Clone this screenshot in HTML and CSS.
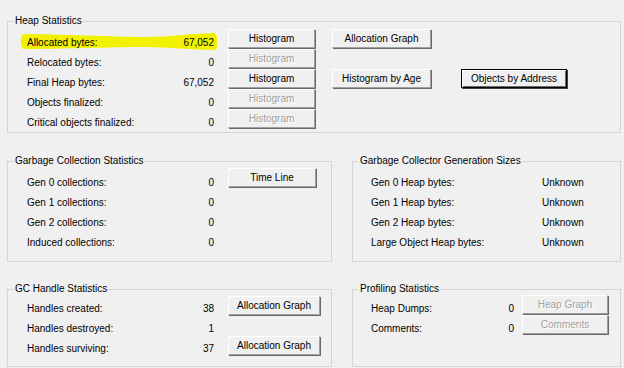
FILE: index.html
```html
<!DOCTYPE html>
<html>
<head>
<meta charset="utf-8">
<link rel="stylesheet" href="styles.css">
</head>
<body>
<div class="page">
  <fieldset class="box heap">
    <legend>Heap Statistics</legend>
    <div class="cols">
      <div class="stats heap-stats">
        <div class="row hl">
          <svg class="marker" width="200" height="18" viewBox="0 0 200 18"><path d="M3,1 C40,1 90,4 125,4 C150,4 175,0 195,0 C198,4 198,13 196,17 C170,17 150,14 125,14 C90,14 40,16 3,16 C0,12 0,5 3,1 Z"/></svg>
          <span class="lbl">Allocated bytes:</span><span class="val">67,052</span>
        </div>
        <div class="row"><span class="lbl">Relocated bytes:</span><span class="val">0</span></div>
        <div class="row"><span class="lbl">Final Heap bytes:</span><span class="val">67,052</span></div>
        <div class="row"><span class="lbl">Objects finalized:</span><span class="val">0</span></div>
        <div class="row"><span class="lbl">Critical objects finalized:</span><span class="val">0</span></div>
      </div>
      <div class="btncol hist-col">
        <button class="btn">Histogram</button>
        <button class="btn" disabled>Histogram</button>
        <button class="btn">Histogram</button>
        <button class="btn" disabled>Histogram</button>
        <button class="btn" disabled>Histogram</button>
      </div>
      <div class="btncol graph-col">
        <button class="btn">Allocation Graph</button>
        <button class="btn spaced">Histogram by Age</button>
      </div>
      <div class="btncol addr-col">
        <button class="btn default">Objects by Address</button>
      </div>
    </div>
  </fieldset>

  <div class="pair mid">
    <fieldset class="box left gc">
      <legend>Garbage Collection Statistics</legend>
      <div class="cols">
        <div class="stats gc-stats">
          <div class="row"><span class="lbl">Gen 0 collections:</span><span class="val">0</span></div>
          <div class="row"><span class="lbl">Gen 1 collections:</span><span class="val">0</span></div>
          <div class="row"><span class="lbl">Gen 2 collections:</span><span class="val">0</span></div>
          <div class="row"><span class="lbl">Induced collections:</span><span class="val">0</span></div>
        </div>
        <div class="btncol time-col">
          <button class="btn">Time Line</button>
        </div>
      </div>
    </fieldset>
    <fieldset class="box right gen">
      <legend>Garbage Collector Generation Sizes</legend>
      <div class="stats gen-stats">
        <div class="grow"><span class="lbl">Gen 0 Heap bytes:</span><span>Unknown</span></div>
        <div class="grow"><span class="lbl">Gen 1 Heap bytes:</span><span>Unknown</span></div>
        <div class="grow"><span class="lbl">Gen 2 Heap bytes:</span><span>Unknown</span></div>
        <div class="grow"><span class="lbl">Large Object Heap bytes:</span><span>Unknown</span></div>
      </div>
    </fieldset>
  </div>

  <div class="pair bottom">
    <fieldset class="box left handle">
      <legend>GC Handle Statistics</legend>
      <div class="cols">
        <div class="stats handle-stats">
          <div class="row"><span class="lbl">Handles created:</span><span class="val">38</span></div>
          <div class="row"><span class="lbl">Handles destroyed:</span><span class="val">1</span></div>
          <div class="row"><span class="lbl">Handles surviving:</span><span class="val">37</span></div>
        </div>
        <div class="btncol handle-col">
          <button class="btn">Allocation Graph</button>
          <button class="btn spaced2">Allocation Graph</button>
        </div>
      </div>
    </fieldset>
    <fieldset class="box right prof">
      <legend>Profiling Statistics</legend>
      <div class="cols">
        <div class="stats prof-stats">
          <div class="row"><span class="lbl">Heap Dumps:</span><span class="val">0</span></div>
          <div class="row"><span class="lbl">Comments:</span><span class="val">0</span></div>
        </div>
        <div class="btncol prof-col">
          <button class="btn" disabled>Heap Graph</button>
          <button class="btn" disabled>Comments</button>
        </div>
      </div>
    </fieldset>
  </div>
</div>
</body>
</html>
```
FILE: styles.css
```css
html, body {
  margin: 0;
  padding: 0;
  background: #f0f0f0;
}
body {
  font-family: "Liberation Sans", Arial, sans-serif;
  font-size: 10px;
  color: #000;
  width: 624px;
  height: 368px;
  overflow: hidden;
}
.page {
  padding: 15px 0 0 7px;
  display: flex;
  flex-direction: column;
}
.box {
  box-sizing: border-box;
  margin: 0;
  padding: 0;
  min-width: 0;
  border: 1px solid #d5d5d5;
}
.box legend {
  margin-left: 6px;
  padding: 0 1px;
  font-size: 10px;
  line-height: 12px;
  color: #000;
}
.heap { width: 614px; height: 118px; }
.pair { display: flex; gap: 20px; }
.mid { margin-top: 22px; }
.bottom { margin-top: 21px; }
.left { width: 325px; }
.right { width: 269px; }
.gc, .gen { height: 107px; }
.handle, .prof { height: 84px; }

.cols { display: flex; align-items: flex-start; }
.stats { display: flex; flex-direction: column; margin-left: 19px; }
.row {
  position: relative;
  display: flex;
  justify-content: space-between;
  height: 20px;
  line-height: 20px;
}
.row span, .grow span { position: relative; }
.heap-stats, .gc-stats, .handle-stats { width: 187px; }
.heap-stats { padding-top: 6px; }
.gc-stats { padding-top: 6px; }
.handle-stats { padding-top: 4px; }
.gen-stats { margin-left: 18px; padding-top: 6px; }
.grow {
  display: grid;
  grid-template-columns: 171px auto;
  height: 20px;
  line-height: 20px;
}
.prof-stats { margin-left: 18px; width: 143px; padding-top: 4px; }

.marker {
  position: absolute;
  left: -7px;
  top: 0;
  fill: #f2f200;
}

.btncol { display: flex; flex-direction: column; align-items: stretch; }
.hist-col { margin-left: 14px; width: 87px; padding-top: 2px; }
.graph-col { margin-left: 17px; width: 99px; padding-top: 2px; }
.addr-col { margin-left: 30px; width: 106px; padding-top: 42px; }
.time-col { margin-left: 14px; width: 88px; padding-top: 1px; }
.handle-col { margin-left: 14px; width: 92px; padding-top: 1px; }
.prof-col { margin-left: 8px; width: 86px; padding-top: 0; }

.btn {
  box-sizing: border-box;
  height: 19px;
  margin: 0 0 1px 0;
  padding: 0;
  font-family: "Liberation Sans", Arial, sans-serif;
  font-size: 10px;
  line-height: 16px;
  color: #000;
  background: #f0f0f0;
  border-top: 1px solid #ffffff;
  border-left: 1px solid #ffffff;
  border-right: 1px solid #a0a0a0;
  border-bottom: 1px solid #a0a0a0;
  box-shadow: 1px 1px 0 #696969;
  border-radius: 0;
  text-align: center;
}
.btn:disabled {
  color: #a0a0a0;
  text-shadow: 1px 1px 0 #ffffff;
}
.btn.spaced { margin-top: 20px; }
.btn.spaced2 { margin-top: 20px; }
.btn.default {
  border: 1px solid #000;
  box-shadow: inset 1px 1px 0 #ffffff, inset -1px -1px 0 #696969, 1px 1px 0 #404040;
}
```
